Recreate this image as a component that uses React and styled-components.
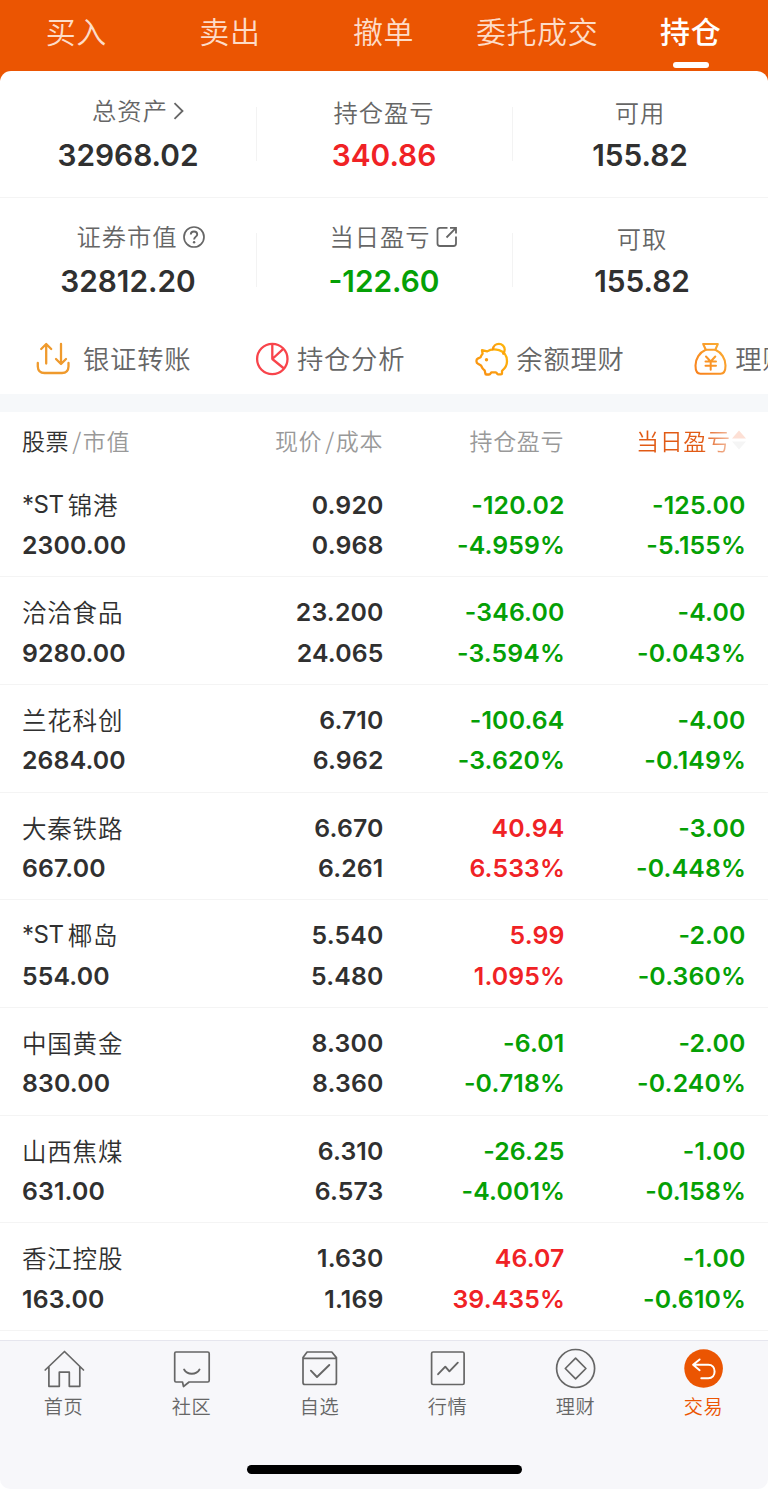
import React from 'react';
import styled, { createGlobalStyle } from 'styled-components';

const tabs = ['买入', '卖出', '撤单', '委托成交', '持仓'];

const summary = [
  [
    { label: '总资产', value: '32968.02', icon: 'chevron', offset: 21 },
    { label: '持仓盈亏', value: '340.86', tone: 'up' },
    { label: '可用', value: '155.82' },
  ],
  [
    { label: '证券市值', value: '32812.20', icon: 'help', offset: 25 },
    { label: '当日盈亏', value: '-122.60', tone: 'down', icon: 'external', offset: 19 },
    { label: '可取', value: '155.82', shift: 2 },
  ],
];

const holdings = [
  ['*ST锦港', '2300.00', '0.920', '0.968', '-120.02', '-4.959%', '-125.00', '-5.155%'],
  ['洽洽食品', '9280.00', '23.200', '24.065', '-346.00', '-3.594%', '-4.00', '-0.043%'],
  ['兰花科创', '2684.00', '6.710', '6.962', '-100.64', '-3.620%', '-4.00', '-0.149%'],
  ['大秦铁路', '667.00', '6.670', '6.261', '40.94', '6.533%', '-3.00', '-0.448%'],
  ['*ST椰岛', '554.00', '5.540', '5.480', '5.99', '1.095%', '-2.00', '-0.360%'],
  ['中国黄金', '830.00', '8.300', '8.360', '-6.01', '-0.718%', '-2.00', '-0.240%'],
  ['山西焦煤', '631.00', '6.310', '6.573', '-26.25', '-4.001%', '-1.00', '-0.158%'],
  ['香江控股', '163.00', '1.630', '1.169', '46.07', '39.435%', '-1.00', '-0.610%'],
];

const toneOf = (value) => (value.startsWith('-') ? 'down' : 'up');

const ChevronIcon = () => (
  <svg width="12" height="20" viewBox="0 0 12 20" fill="none" stroke="#666" strokeWidth="1.8">
    <path d="M1.5 2.2 9.5 10 1.5 17.8" />
  </svg>
);

const HelpIcon = () => (
  <svg width="22" height="22" viewBox="0 0 22 22" fill="none" stroke="#666" strokeWidth="1.7">
    <circle cx="11" cy="11" r="10" />
    <path d="M7.8 8.6C7.8 6.7 9.2 5.5 11 5.5s3.2 1.2 3.2 2.9c0 2-3.1 2.5-3.1 5.1" strokeWidth="1.9" />
    <circle cx="11.1" cy="16.2" r="1.2" fill="#666" stroke="none" />
  </svg>
);

const ExternalIcon = () => (
  <svg width="22" height="22" viewBox="0 0 22 22" fill="none" stroke="#666" strokeWidth="1.8">
    <path d="M11.5 1.8H4Q1.5 1.8 1.5 4.3V17.5Q1.5 20 4 20H17.5Q20 20 20 17.5V10.5" />
    <path d="M14 1.8H20V7.6M20 1.8 10.5 11.5" />
  </svg>
);

const labelIcons = {
  chevron: ChevronIcon,
  help: HelpIcon,
  external: ExternalIcon,
};

const TransferIcon = () => (
  <svg width="34" height="34" viewBox="0 0 34 34" fill="none" stroke="#ef9a2d" strokeWidth="2.3" strokeLinecap="round" strokeLinejoin="round">
    <path d="M10.2 21.5V2.5M5.2 7 10.2 2 15.2 7" />
    <path d="M25 2V21.5M20 17 25 22 30 17" />
    <path d="M1.8 21V24.5Q2 31 8.5 31H26Q32.3 31 32.5 24.5V21" />
  </svg>
);

const PieIcon = () => (
  <svg width="34" height="34" viewBox="0 0 34 34" fill="none" stroke="#f8444b" strokeWidth="2.3">
    <circle cx="17.3" cy="17" r="15.2" />
    <path d="M17.3 2V17L28.3 6.8M17.3 17 29 26.5" strokeLinejoin="round" />
  </svg>
);

const PiggyIcon = () => (
  <svg width="34" height="34" viewBox="0 0 34 34" fill="none" stroke="url(#pig)" strokeWidth="2.3" strokeLinejoin="round" strokeLinecap="round">
    <defs>
      <linearGradient id="pig" x1="0" y1="1" x2="1" y2="0">
        <stop offset="0" stopColor="#f88b12" />
        <stop offset="1" stopColor="#ffb90a" />
      </linearGradient>
    </defs>
    <path d="M7 8.2 12.2 9.4C15 7.5 20 7 24 8.2 29 9.7 32 14 32 19.3 32 23.5 30 26.5 27 28.8V31.5Q27 32.3 26 32.3H23Q22.3 32.3 21.7 31L20.8 30.3H16.5L15.5 31.5Q15 32.5 14 32.5H11.3Q10.4 32.5 10.3 31.3L9.7 28.4C8 27.4 6.8 25.5 6 23.5L3 21.7Q1.5 21 1.5 19.5V18.4Q1.5 17.2 2.7 16.6L5.6 15.3C6 13.8 6.7 12.8 7.6 11.8Z" />
    <path d="M18 7.2C18.2 4 20.8 1.9 23.9 1.9 27.2 1.9 29.7 4.5 29.7 7.5 29.7 9.2 29.2 10.5 28.2 11.7" />
    <circle cx="11.5" cy="17.7" r="1.7" fill="#f99b10" stroke="none" />
  </svg>
);

const MoneyBagIcon = () => (
  <svg width="34" height="34" viewBox="0 0 34 34" fill="none" stroke="url(#bag)" strokeWidth="2.1" strokeLinejoin="round" strokeLinecap="round">
    <defs>
      <linearGradient id="bag" gradientUnits="userSpaceOnUse" x1="2" y1="32" x2="32" y2="2">
        <stop offset="0" stopColor="#f8801c" />
        <stop offset="1" stopColor="#fbb034" />
      </linearGradient>
    </defs>
    <path d="M9.2 2H23.8L21.3 7.8H11.8Z" />
    <path d="M11.8 7.8C5.5 10.5 1.5 16.8 1.5 23.5 1.5 28.8 2.700 31.800 6.500 31.800H26.500C30.300 31.800 31.500 28.800 31.500 23.500 31.500 16.800 27.500 10.500 21.300 7.800" />
    <path d="M12 14.500 16.700 19.500 21.300 14.500M16.700 19.500V27.700M11.500 19.500H22M11.500 23.700H22" strokeWidth="2" />
  </svg>
);

const shortcuts = [
  { label: '银证转账', Icon: TransferIcon, gap: 13 },
  { label: '持仓分析', Icon: PieIcon, gap: 7.5 },
  { label: '余额理财', Icon: PiggyIcon, gap: 7.5 },
  { label: '理财', Icon: MoneyBagIcon, gap: 7 },
];

const NavSvg = ({ children }) => (
  <svg width="42" height="42" viewBox="0 0 42 42" fill="none" stroke="#666" strokeWidth="1.7" strokeLinejoin="round" strokeLinecap="round">
    {children}
  </svg>
);

const navItems = [
  {
    label: '首页',
    icon: (
      <NavSvg>
        <path d="M2.2 22 21.5 3.5 40.5 22M5.9 19V38.3H16.3V24.2H26.3V38.3H36.8V19" />
      </NavSvg>
    ),
  },
  {
    label: '社区',
    icon: (
      <NavSvg>
        <path d="M5 4H36.7Q38.2 4 38.2 5.500V32.500Q38.200 34 36.700 34H18.100L12.500 38.500 11.500 34H5Q3.700 34 3.700 32.500V5.500Q3.700 4 5 4Z" />
        <path d="M13.100 21.500Q15.500 25.800 20.800 25.800T28.500 21.500" strokeWidth="1.9" />
      </NavSvg>
    ),
  },
  {
    label: '自选',
    icon: (
      <NavSvg>
        <path d="M8.1 4H32.800L37.400 9.600V34.500Q37.400 36.500 35.400 36.500H5.800Q4 36.500 4 34.500V9.600ZM4.300 10.400H37.300" />
        <path d="M11.900 22.700 18 29 30.300 17" strokeWidth="1.9" />
      </NavSvg>
    ),
  },
  {
    label: '行情',
    icon: (
      <NavSvg>
        <rect x="4.6" y="4" width="32.5" height="32.5" rx="1.5" />
        <path d="M11.1 26.2 18.300 18.700 22.400 23.300 30.800 14.700" strokeWidth="1.9" />
      </NavSvg>
    ),
  },
  {
    label: '理财',
    icon: (
      <NavSvg>
        <circle cx="20.6" cy="20.5" r="19" />
        <path d="M20.6 10.2 30.900 20.500 20.600 30.800 10.300 20.500Z" />
      </NavSvg>
    ),
  },
  {
    label: '交易',
    active: true,
    icon: (
      <NavSvg>
        <circle cx="20.6" cy="20.5" r="19.3" fill="#eb5502" stroke="none" />
        <path d="M16.6 11.500 10.100 16.800 16.600 22.200M10.100 16.800H25.300C29.300 16.800 31.600 19.800 31.600 23.500S29.300 30.200 25.300 30.200H18.300" stroke="#fff" strokeWidth="2" />
      </NavSvg>
    ),
  },
];

const App = () => (
  <Page>
    <GlobalStyle />
    <TopTabs>
      {tabs.map((tab) => (
        <TopTab key={tab} $active={tab === '持仓'}>
          {tab}
        </TopTab>
      ))}
    </TopTabs>
    <SummaryCard>
      {summary.map((row, i) => (
        <SummaryRow key={i}>
          {row.map(({ label, value, tone, icon, offset, shift }) => {
            const Icon = labelIcons[icon];
            return (
              <SummaryCell key={label} $shift={shift}>
                <SummaryLabel $offset={offset}>
                  <LabelText>{label}</LabelText>
                  {Icon && <Icon />}
                </SummaryLabel>
                <SummaryValue $tone={tone}>{value}</SummaryValue>
              </SummaryCell>
            );
          })}
        </SummaryRow>
      ))}
      <Shortcuts>
        {shortcuts.map(({ label, Icon, gap }) => (
          <Shortcut key={label} $gap={gap}>
            <Icon />
            <ShortcutLabel>{label}</ShortcutLabel>
          </Shortcut>
        ))}
      </Shortcuts>
    </SummaryCard>
    <Holdings>
      <ListHeader>
        <HeaderCell>
          <Strong>股票</Strong>
          <Slash>/</Slash>市值
        </HeaderCell>
        <HeaderCell>
          现价<Slash>/</Slash>成本
        </HeaderCell>
        <HeaderCell>持仓盈亏</HeaderCell>
        <SortedCell>
          当日盈亏
          <svg width="14" height="20" viewBox="0 0 14 20">
            <path d="M0 8.5 7 0.5 14 8.5Z" fill="#fde0d5" />
            <path d="M0 11.5H14L7 19.5Z" fill="#f5f5f5" />
          </svg>
        </SortedCell>
      </ListHeader>
      {holdings.map(([name, amount, price, cost, total, totalPct, day, dayPct]) => (
        <HoldingRow key={name}>
          <HoldingCell>
            <StockName>
              {name.startsWith('*ST') ? (
                <>
                  <Prefix>*ST</Prefix>
                  {name.slice(3)}
                </>
              ) : (
                name
              )}
            </StockName>
            <span>{amount}</span>
          </HoldingCell>
          <HoldingCell>
            <span>{price}</span>
            <span>{cost}</span>
          </HoldingCell>
          <HoldingCell $tone={toneOf(total)}>
            <span>{total}</span>
            <Percent>{totalPct}</Percent>
          </HoldingCell>
          <HoldingCell $tone={toneOf(day)}>
            <span>{day}</span>
            <Percent>{dayPct}</Percent>
          </HoldingCell>
        </HoldingRow>
      ))}
    </Holdings>
    <BottomBar>
      <BottomNav>
        {navItems.map(({ label, icon, active }) => (
          <NavItem key={label} $active={active}>
            {icon}
            <NavLabel>{label}</NavLabel>
          </NavItem>
        ))}
      </BottomNav>
      <HomeIndicator />
    </BottomBar>
  </Page>
);

// Styled components
const colors = {
  up: '#f02225',
  down: '#05a005',
  text: '#303030',
};

const GlobalStyle = createGlobalStyle`
  * {
    box-sizing: border-box;
  }

  body {
    margin: 0;
    background: #fff;
  }

  svg {
    display: block;
    flex-shrink: 0;
  }
`;

const Page = styled.div`
  width: 768px;
  height: 1489px;
  display: flex;
  flex-direction: column;
  overflow: hidden;
  background: #fff;
  color: ${colors.text};
  font-family: 'Noto Sans CJK SC', sans-serif;
  font-weight: 350;
  white-space: nowrap;
`;

const TopTabs = styled.nav`
  display: grid;
  grid-template-columns: repeat(5, 1fr);
  height: 81px;
  flex-shrink: 0;
  background: #eb5502;
`;

const TopTab = styled.div`
  position: relative;
  height: 71px;
  padding-right: 1px;
  text-align: center;
  font-size: 30px;
  letter-spacing: 0.6px;
  line-height: 60px;
  font-weight: ${({ $active }) => ($active ? 500 : 350)};
  color: ${({ $active }) => ($active ? '#fff' : '#fddcc8')};

  &::after {
    content: '';
    display: ${({ $active }) => ($active ? 'block' : 'none')};
    position: absolute;
    left: calc(50% - 18px);
    bottom: 3px;
    width: 36px;
    height: 6px;
    border-radius: 3px;
    background: #fff;
  }
`;

const SummaryCard = styled.section`
  margin-top: -10px;
  height: 323px;
  flex-shrink: 0;
  background: #fff;
  border-radius: 11px 11px 0 0;
`;

const SummaryRow = styled.div`
  display: grid;
  grid-template-columns: repeat(3, 1fr);
  height: 126px;

  &:first-child {
    border-bottom: 1px solid #f4f4f4;
    height: 127px;
    padding-top: 1px;
  }
`;

const SummaryCell = styled.div`
  position: relative;
  display: flex;
  flex-direction: column;
  align-items: center;
  padding-top: 23px;
  padding-left: ${({ $shift = 0 }) => $shift * 2}px;

  &:not(:last-child)::after {
    content: '';
    position: absolute;
    right: -1px;
    top: 35px;
    width: 1px;
    height: 54px;
    background: #f3f3f3;
  }
`;

const SummaryLabel = styled.div`
  display: flex;
  align-items: center;
  gap: 5px;
  height: 36px;
  padding-left: ${({ $offset = 0 }) => $offset}px;
  padding-bottom: ${({ $offset }) => ($offset ? 4 : 0)}px;
  font-size: 24.3px;
  letter-spacing: 1px;
  color: #666;
`;

const LabelText = styled.span`
  line-height: 34px;
  padding-bottom: 2px;
`;

const SummaryValue = styled.div`
  height: 48px;
  line-height: 48px;
  font-family: Inter, sans-serif;
  font-size: 29.8px;
  font-weight: 600;
  color: ${({ $tone }) => colors[$tone || 'text']};
`;

const Shortcuts = styled.div`
  display: flex;
  height: 70px;
  padding-left: 36px;
  overflow: hidden;
`;

const Shortcut = styled.div`
  display: flex;
  align-items: center;
  gap: ${({ $gap }) => $gap}px;
  flex: 0 0 219.4px;
`;

const ShortcutLabel = styled.span`
  padding-bottom: 4px;
  font-size: 26.3px;
  letter-spacing: 0.8px;
  color: #666;
`;

const Holdings = styled.section`
  height: 946px;
  flex-shrink: 0;
  overflow: hidden;
  border-top: 18px solid #f6f8fa;
`;

const ListHeader = styled.div`
  display: grid;
  grid-template-columns: 200px 161px 181px 181.5px;
  padding-left: 22px;
  height: 57.7px;
  font-size: 23px;
  letter-spacing: 0.6px;
  line-height: 56px;
  color: #999;
`;

const HeaderCell = styled.div`
  text-align: right;

  &:first-child {
    text-align: left;
  }
`;

const Strong = styled.span`
  color: ${colors.text};
`;

const Slash = styled.span`
  padding: 0 1px 0 3px;
`;

const SortedCell = styled.div`
  display: flex;
  align-items: center;
  justify-content: flex-end;
  gap: 1px;
  height: 56px;
  color: transparent;
  background: linear-gradient(90deg, #e15a14 0, #e15a14 138px, #fff 184px);
  background-clip: text;
`;

const HoldingRow = styled.div`
  display: grid;
  grid-template-columns: 200px 161.5px 181px 181px;
  height: 107.65px;
  padding: 15px 0 0 22px;
  border-bottom: 1px solid #f4f4f4;
`;

const HoldingCell = styled.div`
  display: flex;
  flex-direction: column;
  align-items: flex-end;
  font-family: Inter, sans-serif;
  font-size: 24.8px;
  font-weight: 580;
  letter-spacing: 0.15px;
  line-height: 40.5px;
  color: ${({ $tone }) => colors[$tone || 'text']};

  &:first-child {
    align-items: flex-start;
  }
`;

const Percent = styled.span`
  margin-right: -0.6px;
`;

const StockName = styled.span`
  display: flex;
  height: 40.5px;
  line-height: 39px;
  font-family: 'Noto Sans CJK SC', sans-serif;
  font-size: 24.5px;
  font-weight: 350;
  letter-spacing: 0.8px;
`;

const Prefix = styled.span`
  margin-right: 4px;
  font-family: Inter, sans-serif;
  font-size: 24px;
  font-weight: 400;
  letter-spacing: -0.4px;
`;

const BottomBar = styled.footer`
  display: flex;
  flex-direction: column;
  align-items: center;
  height: 149px;
  flex-shrink: 0;
  background: #f7f7fa;
  border-top: 1px solid #e6e6ee;
  border-radius: 0 0 10px 10px;
`;

const BottomNav = styled.nav`
  display: grid;
  grid-template-columns: repeat(6, 1fr);
  width: 100%;
  height: 124px;
`;

const NavItem = styled.div`
  display: flex;
  flex-direction: column;
  align-items: center;
  padding-top: 7px;
  color: ${({ $active }) => ($active ? '#eb5502' : '#666')};
`;

const NavLabel = styled.span`
  padding-right: 1px;
  font-size: 19.2px;
  letter-spacing: 0.6px;
  line-height: 32px;
`;

const HomeIndicator = styled.div`
  width: 275px;
  height: 9px;
  border-radius: 5px;
  background: #000;
`;

export default App;
